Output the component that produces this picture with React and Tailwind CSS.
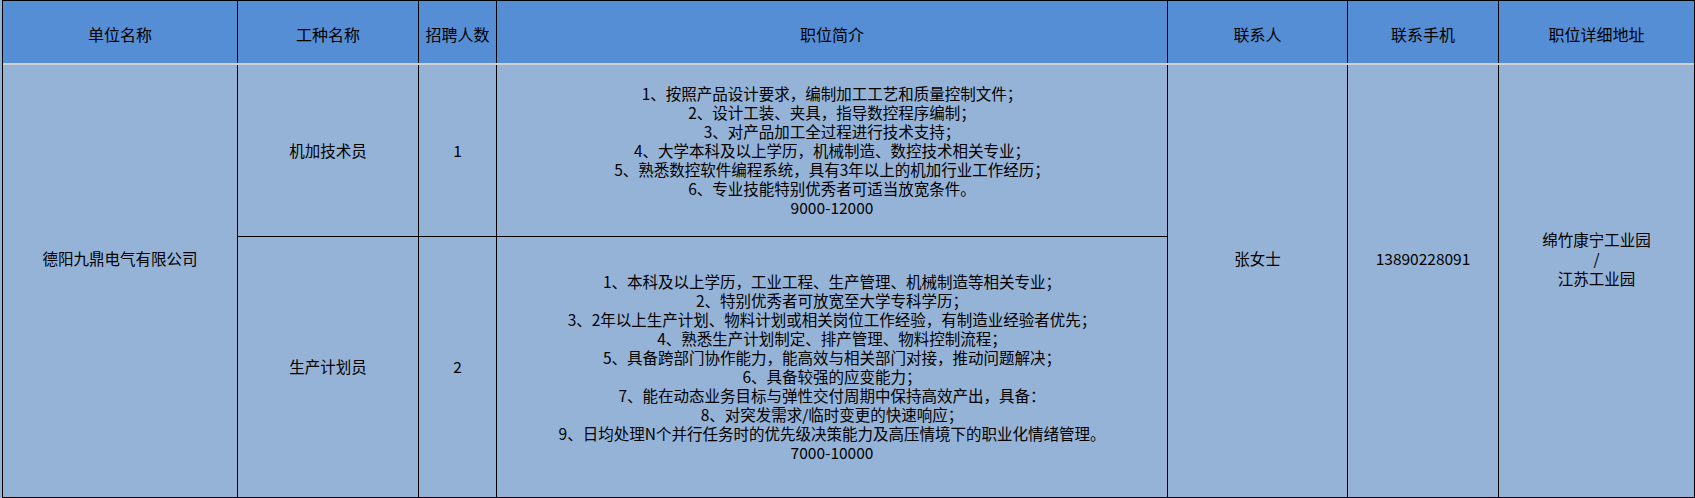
const cols = "grid grid-cols-[234px_180px_77px_670px_179px_150px_195px]";
const cell = "bg-[#95B3D7] flex items-center justify-center text-center";

const jobs = [
  {
    name: "机加技术员",
    count: "1",
    lines: [
      "1、按照产品设计要求，编制加工工艺和质量控制文件；",
      "2、设计工装、夹具，指导数控程序编制；",
      "3、对产品加工全过程进行技术支持；",
      "4、大学本科及以上学历，机械制造、数控技术相关专业；",
      "5、熟悉数控软件编程系统，具有3年以上的机加行业工作经历；",
      "6、专业技能特别优秀者可适当放宽条件。",
      "9000-12000",
    ],
  },
  {
    name: "生产计划员",
    count: "2",
    lines: [
      "1、本科及以上学历，工业工程、生产管理、机械制造等相关专业；",
      "2、特别优秀者可放宽至大学专科学历；",
      "3、2年以上生产计划、物料计划或相关岗位工作经验，有制造业经验者优先；",
      "4、熟悉生产计划制定、排产管理、物料控制流程；",
      "5、具备跨部门协作能力，能高效与相关部门对接，推动问题解决；",
      "6、具备较强的应变能力；",
      "7、能在动态业务目标与弹性交付周期中保持高效产出，具备：",
      "8、对突发需求/临时变更的快速响应；",
      "9、日均处理N个并行任务时的优先级决策能力及高压情境下的职业化情绪管理。",
      "7000-10000",
    ],
  },
];

const headers = ["单位名称", "工种名称", "招聘人数", "职位简介", "联系人", "联系手机", "职位详细地址"];

export default function App() {
  return (
    <div
      className="w-[1695px] h-[498px] bg-[#95B3D7] pl-[2px] text-black text-[15.5px]"
      style={{ fontFamily: '"Noto Sans CJK SC", "Noto Sans", sans-serif' }}
    >
      <div className="w-[1693px] h-[498px] border-l border-r border-black">
        {/* header */}
        <div className={`${cols} gap-x-px bg-black border-t border-black`}>
          {headers.map((h) => (
            <div key={h} className="h-[62px] bg-[#558ED5] flex items-center justify-center pt-[3px] text-[16px]">
              {h}
            </div>
          ))}
        </div>
        <div className="h-[2px] bg-[#d0d0d0]" />

        {/* body */}
        <div className={`${cols} grid-rows-[171px_260px] gap-px bg-black border-b border-black`}>
          <div className={`${cell} row-span-2 pb-[44px]`}>德阳九鼎电气有限公司</div>

          <div className={cell}>{jobs[0].name}</div>
          <div className={cell}>{jobs[0].count}</div>
          <div className={`${cell} flex-col leading-[18.9px]`}>
            {jobs[0].lines.map((l) => (
              <div key={l}>{l}</div>
            ))}
          </div>

          <div className={`${cell} row-span-2 pb-[44px]`}>张女士</div>
          <div className={`${cell} row-span-2 pb-[44px]`}>13890228091</div>
          <div className={`${cell} row-span-2 pb-[44px] flex-col leading-[19.5px]`}>
            <div>绵竹康宁工业园</div>
            <div>/</div>
            <div>江苏工业园</div>
          </div>

          <div className={`${cell} col-start-2`}>{jobs[1].name}</div>
          <div className={cell}>{jobs[1].count}</div>
          <div className={`${cell} flex-col leading-[18.9px]`}>
            {jobs[1].lines.map((l) => (
              <div key={l}>{l}</div>
            ))}
          </div>
        </div>
      </div>
    </div>
  );
}
